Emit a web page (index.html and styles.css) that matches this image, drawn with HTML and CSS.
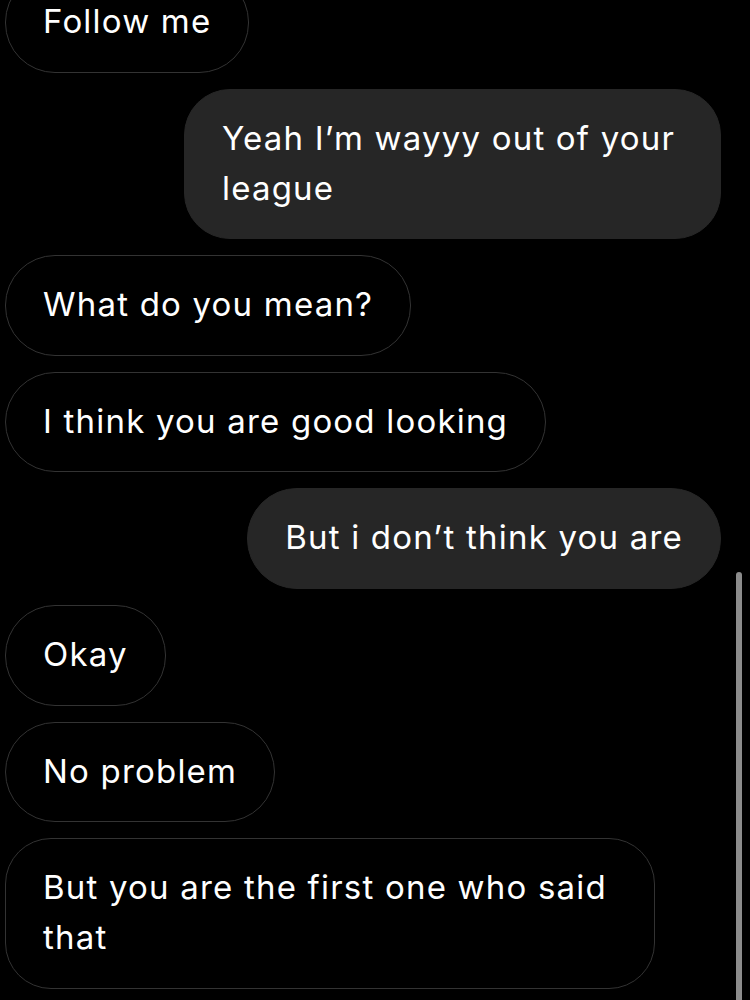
FILE: index.html
```html
<!DOCTYPE html>
<html lang="en">
<head>
    <meta charset="UTF-8">
    <meta name="viewport" content="width=device-width, initial-scale=1.0">
    <title>chat</title>
    <link rel="stylesheet" href="styles.css">
</head>
<body>
    <div class="thread">
        <div class="bubble in">Follow me</div>
        <div class="bubble out out-wide">Yeah I’m wayyy out of your league</div>
        <div class="bubble in">What do you mean?</div>
        <div class="bubble in">I think you are good looking</div>
        <div class="bubble out">But i don’t think you are</div>
        <div class="bubble in">Okay</div>
        <div class="bubble in">No problem</div>
        <div class="bubble in in-wide">But you are the first one who said that</div>
    </div>
    <div class="scrollbar"></div>
</body>
</html>
```

FILE: styles.css
```css
body {
    margin: 0;
    background: #000;
    color: #fff;
    font-family: Inter, "Noto Sans", sans-serif;
    height: 1000px;
    overflow: hidden;
    position: relative;
}
.thread {
    display: flex;
    flex-direction: column;
    gap: 16px;
    margin-top: -28px;
    padding: 0 29px 0 5px;
}
.bubble {
    box-sizing: border-box;
    width: fit-content;
    font-size: 33px;
    letter-spacing: 1.2px;
    line-height: 50px;
    padding: 23px 37px 25.6px 37px;
    border: 1px solid #333;
    border-radius: 50px;
}
.in {
    align-self: flex-start;
}
.out {
    align-self: flex-end;
    background: #262626;
    border-color: #262626;
}
.out-wide {
    width: 537px;
    border-radius: 46px;
}
.in-wide {
    width: 650px;
    border-radius: 46px;
}
.scrollbar {
    position: absolute;
    right: 8px;
    top: 572px;
    width: 6px;
    height: 440px;
    border-radius: 3px;
    background: #8c8c8c;
}
```
